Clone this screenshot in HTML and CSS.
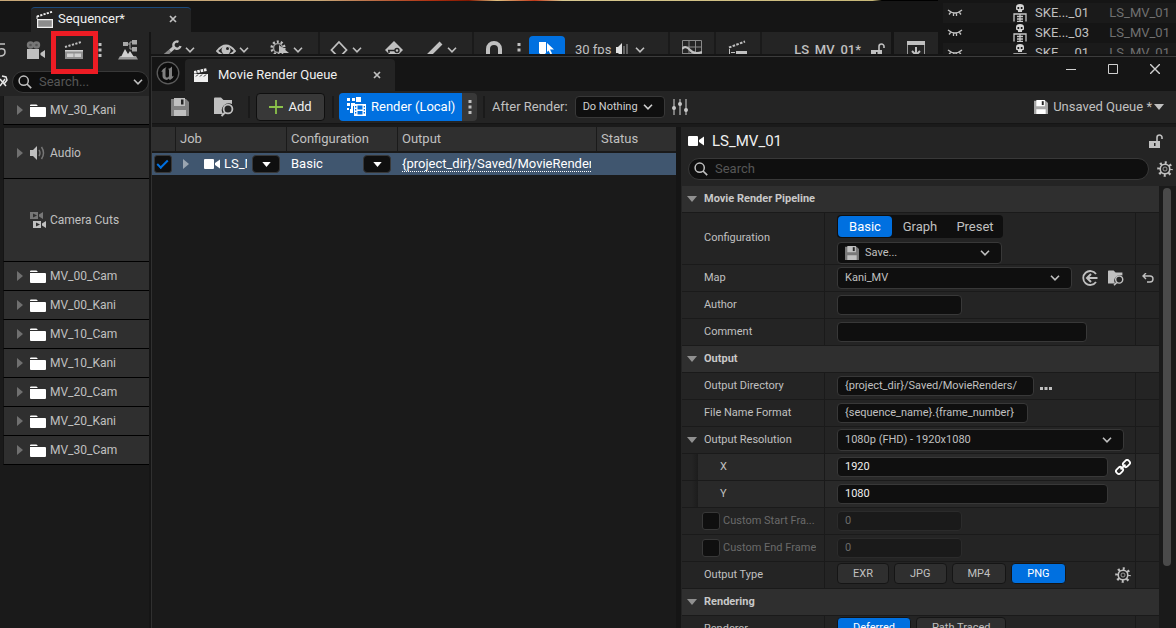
FILE: index.html
```html
<!DOCTYPE html>
<html lang="en">
<head>
<meta charset="utf-8">
<title>Movie Render Queue</title>
<link rel="stylesheet" href="styles.css">
</head>
<body>
<svg class="defs" aria-hidden="true">
  <symbol id="chev" viewBox="0 0 10 6"><path d="M1 .8l4 4 4-4" fill="none" stroke="currentColor" stroke-width="1.6"/></symbol>
  <symbol id="close" viewBox="0 0 8 8"><path d="M1 1l6 6M7 1L1 7" stroke="currentColor" stroke-width="1.7"/></symbol>
  <symbol id="tri-r" viewBox="0 0 6 10"><path d="M0 0l6 5-6 5z" fill="currentColor"/></symbol>
  <symbol id="tri-d" viewBox="0 0 10 6"><path d="M0 0h10L5 6z" fill="currentColor"/></symbol>
  <symbol id="dots" viewBox="0 0 4 14"><path d="M.5 0h3v3h-3zM.5 5.500h3v3h-3zM.5 11h3v3h-3z" fill="currentColor"/></symbol>
  <symbol id="search" viewBox="0 0 14 14"><circle cx="5.700" cy="5.700" r="4.600" fill="none" stroke="currentColor" stroke-width="1.500"/><path d="M9 9l4.200 4.200" stroke="currentColor" stroke-width="1.700"/></symbol>
  <symbol id="folder" viewBox="0 0 16 13"><path d="M0 1.500Q0 .5 1 .5h5.500L8 2H0zM0 3h15q1 0 1 1v8q0 1-1 1H1q-1 0-1-1z" fill="currentColor"/></symbol>
  <symbol id="cam" viewBox="0 0 16 10"><rect width="10" height="10" rx="1" fill="currentColor"/><path d="M16 .5v9L11 6V4z" fill="currentColor"/></symbol>
  <symbol id="save" viewBox="0 0 18 18"><path d="M0 1h15l3 3v14H0z" fill="currentColor" opacity=".6"/><path d="M3 0h11v8H3zM3 12h12v6H3z" fill="currentColor"/><path d="M10 1.500h2.500v5H10z" fill="#222"/></symbol>
  <symbol id="browse" viewBox="0 0 20 20"><path d="M0 1.500Q0 .5 1 .5h6L9.500 3H18v4a7 7 0 0 0-9 10H0z" fill="currentColor"/><circle cx="14" cy="12" r="4.400" fill="none" stroke="currentColor" stroke-width="1.800"/><path d="M11 15.500L7.500 19" stroke="currentColor" stroke-width="2"/></symbol>
  <symbol id="slate" viewBox="0 0 18 18"><path d="M1.600 9.600h14.800v7.800H1.600z" fill="#8c8c8c" stroke="currentColor" stroke-width="1.200"/><path d="M1 6.500L16 1.800" stroke="currentColor" stroke-width="1.900" stroke-dasharray="2.200 1.200"/><path d="M1 6v3" stroke="currentColor"/></symbol>
  <symbol id="slate-grid" viewBox="0 0 20 20"><path d="M1 10h18v9H1z" fill="#909090"/><path d="M1 10h18v1.500H1zM3 13.500h6.500V17H3zM10.500 13.500H17V17h-6.500z" fill="#d0d0d0"/><path d="M1 7L18 1.800" stroke="currentColor" stroke-width="2" stroke-dasharray="2.200 1.400"/></symbol>
  <symbol id="slate-solid" viewBox="0 0 14 14"><path d="M0 6h14v8H0z" fill="currentColor"/><path d="M0 4.500L13 1.500" stroke="currentColor" stroke-width="2.800" stroke-dasharray="2.600 .8"/><path d="M2 8.500l2-2M6 8.500l2-2M10 8.500l2-2" stroke="#242424"/></symbol>
  <symbol id="gear" viewBox="0 0 16 16"><circle cx="8" cy="8" r="6.300" fill="none" stroke="currentColor" stroke-width="3" stroke-dasharray="2 2.948" stroke-dashoffset="1"/><circle cx="8" cy="8" r="4.800" fill="none" stroke="currentColor" stroke-width="1.600"/><circle cx="8" cy="8" r="2" fill="none" stroke="currentColor" opacity=".7"/></symbol>
  <symbol id="lock" viewBox="0 0 14 14"><path d="M0 7h11v7H0z" fill="currentColor"/><path d="M8 7V3.500a2.500 2.500 0 0 1 5 0V5" fill="none" stroke="currentColor" stroke-width="1.600"/><path d="M5 9h1.500v3H5z" fill="#242424"/></symbol>
  <symbol id="lash" viewBox="0 0 16 8"><path d="M1 1q7 6 14 0M3.500 3.500l-1.500 2M6.500 4.500V7M9.500 4.500V7M12.500 3.500l1.500 2" fill="none" stroke="currentColor" stroke-width="1.300"/></symbol>
  <symbol id="skel" viewBox="0 0 14 18"><path d="M3 3q0-3 4-3t4 3v2.500l-2 1V8H5V6.500l-2-1z" fill="#d4d4d4"/><path d="M4.500 3h1.700v2H4.500zM7.800 3h1.700v2H7.800z" fill="#1a1a1a"/><path d="M1 17.500V10h12v7.500M4 12.500h6M4 15h6M4 17.500h6M7 10v7" fill="none" stroke="#c8c8c8" stroke-width="1.300"/></symbol>
</svg>

<div class="app">
  <div class="back">
    <div class="editor">
      <div class="film"></div>
      <div class="tabs">
        <div class="tab seq-tab">
          <svg class="i18"><use href="#slate"/></svg><span>Sequencer*</span>
          <button class="plain x" aria-label="Close Sequencer"><svg class="i8"><use href="#close"/></svg></button>
        </div>
      </div>
      <div class="seq">
        <div class="left">
          <div class="ltools">
            <svg width="6" height="14" viewBox="0 0 6 14" fill="none" stroke="currentColor" stroke-width="1.500"><path d="M0 1h5M0 6q5-1 5 3t-5 4"/></svg>
            <button class="plain" aria-label="Camera"><svg width="20" height="18" viewBox="0 0 20 18"><circle cx="5.500" cy="4" r="3.700" fill="#777"/><circle cx="11.500" cy="4" r="3.700" fill="#777"/><circle cx="5.500" cy="4" r="1.300" fill="#555"/><circle cx="11.500" cy="4" r="1.300" fill="#555"/><path d="M2 8h12v10H2zM20 9v8l-4.500-3v-2z" fill="currentColor"/></svg></button>
            <button class="plain" aria-label="Render movie"><svg class="i20"><use href="#slate-grid"/></svg></button>
            <button class="plain" aria-label="Render options"><svg width="4" height="14"><use href="#dots"/></svg></button>
            <button class="plain" aria-label="Scene actions"><svg width="20" height="20" viewBox="0 0 20 20"><path d="M0 19.500L2 16h16l2 3.500z" fill="#999"/><path d="M3 17l4-8 3 5 2-3 4 6z" fill="#d0d0d0"/><path d="M5 2h5v4H5zM14 0h5v4.500h-5zM14 7h5v4.500h-5z" fill="#a8a8a8"/><path d="M10 4h2v5h2M12 4V2h2" fill="none" stroke="#a8a8a8"/></svg></button>
          </div>
          <div class="lsearch">
            <svg width="8" height="16" viewBox="0 0 8 16"><path d="M0 12l5-7M0 5l6 7M2 2l4 1 1 3-3 4" stroke="#e8e8e8" stroke-width="1.500" fill="none"/></svg>
            <div class="pill">
              <svg class="i14"><use href="#search"/></svg>
              <input type="text" placeholder="Search..." aria-label="Search tracks">
              <svg class="chev"><use href="#chev"/></svg>
            </div>
          </div>
          <ul class="tracks">
            <li class="pinned"><svg class="tri"><use href="#tri-r"/></svg><svg class="fold"><use href="#folder"/></svg>MV_30_Kani</li>
            <li class="audio"><svg class="tri"><use href="#tri-r"/></svg><svg width="16" height="14" viewBox="0 0 16 14"><path d="M0 4h3l4-4v14l-4-4H0z" fill="#c0c0c0"/><path d="M9 4q2 3 0 6M11.500 1q4 6 0 12" fill="none" stroke="#777" stroke-width="1.500"/></svg>Audio</li>
            <li class="cuts"><span class="tri"></span><svg width="16" height="17" viewBox="0 0 16 17"><path d="M0 0h8v7H0zM13 0v7L9 4.500v-2z" fill="#777"/><path d="M3 1.500v4L7 3.500z" fill="#2f2f2f"/><path d="M3 9h8v7H3zM16 9v7l-4-2.500v-2z" fill="#c0c0c0"/><path d="M6 10.500v4l4-2z" fill="#2f2f2f"/></svg>Camera Cuts</li>
            <li><svg class="tri"><use href="#tri-r"/></svg><svg class="fold"><use href="#folder"/></svg>MV_00_Cam</li>
            <li><svg class="tri"><use href="#tri-r"/></svg><svg class="fold"><use href="#folder"/></svg>MV_00_Kani</li>
            <li><svg class="tri"><use href="#tri-r"/></svg><svg class="fold"><use href="#folder"/></svg>MV_10_Cam</li>
            <li><svg class="tri"><use href="#tri-r"/></svg><svg class="fold"><use href="#folder"/></svg>MV_10_Kani</li>
            <li><svg class="tri"><use href="#tri-r"/></svg><svg class="fold"><use href="#folder"/></svg>MV_20_Cam</li>
            <li><svg class="tri"><use href="#tri-r"/></svg><svg class="fold"><use href="#folder"/></svg>MV_20_Kani</li>
            <li><svg class="tri"><use href="#tri-r"/></svg><svg class="fold"><use href="#folder"/></svg>MV_30_Cam</li>
          </ul>
        </div>
        <div class="rtools">
          <div class="group g-view">
            <button class="plain drop" aria-label="Actions"><svg class="i20" viewBox="0 0 20 20"><path d="M0 18l8-7" stroke="#888" stroke-width="3.600"/><path d="M8 11l4-3.500" stroke="currentColor" stroke-width="3.200"/><path d="M16.500 1.800A3.600 3.600 0 1 0 18.500 6" fill="none" stroke="currentColor" stroke-width="2.400"/></svg><svg class="chev"><use href="#chev"/></svg></button>
            <button class="plain drop" aria-label="View"><svg class="i20" viewBox="0 0 20 20"><path d="M1 11q9-11 18 0-9 9-18 0z" fill="none" stroke="currentColor" stroke-width="1.800"/><circle cx="10" cy="10" r="4.500" fill="currentColor"/><circle cx="11.500" cy="8.500" r="1.500" fill="#242424"/></svg><svg class="chev"><use href="#chev"/></svg></button>
            <button class="plain drop" aria-label="Playback"><svg class="i20" viewBox="0 0 20 20"><circle cx="8" cy="8" r="6.300" fill="none" stroke="currentColor" stroke-width="2.600" stroke-dasharray="2 1.958"/><circle cx="8" cy="8" r="4.500" fill="none" stroke="#999" stroke-width="1.600"/><path d="M9 5l10 8H9z" fill="currentColor"/></svg><svg class="chev"><use href="#chev"/></svg></button>
          </div>
          <div class="group g-keys">
            <button class="plain drop" aria-label="Key interpolation"><svg class="i20" viewBox="0 0 20 20"><path d="M10 2l7.500 8-7.500 8-7.500-8z" fill="none" stroke="currentColor" stroke-width="1.800"/></svg><svg class="chev"><use href="#chev"/></svg></button>
            <button class="plain" aria-label="Auto key"><svg class="i20" viewBox="0 0 20 20"><path d="M11 1l9 9-9 9-9-9z" fill="currentColor"/><path d="M5 10.500h7M6 10.500v2.500" stroke="#242424" stroke-width="1.500"/><circle cx="14" cy="10.500" r="2" fill="none" stroke="#242424" stroke-width="1.400"/></svg></button>
            <button class="plain drop" aria-label="Edit"><svg class="i20" viewBox="0 0 20 20"><path d="M4 16L17 3" stroke="currentColor" stroke-width="4"/></svg><svg class="chev"><use href="#chev"/></svg></button>
          </div>
          <div class="group g-snap">
            <button class="plain" aria-label="Snap"><svg width="18" height="20" viewBox="0 0 18 20"><path d="M3 18V9a6 6 0 0 1 12 0v9" fill="none" stroke="currentColor" stroke-width="4"/></svg></button>
            <button class="plain" aria-label="Snap options"><svg width="4" height="14"><use href="#dots"/></svg></button>
            <button class="bluebtn" aria-label="Marker"><svg width="18" height="18" viewBox="0 0 18 18"><path d="M1 1h7v11l-3.500 3L1 12z" fill="#fff"/><path d="M9 2l7 6.500h-4l2 4-1.500 1-2-4L9 11z" fill="#fff"/></svg></button>
            <button class="plain fps">30 fps</button>
            <svg width="14" height="14" viewBox="0 0 14 14"><path d="M0 4h2l4-4v14l-4-4H0z" fill="#e0e0e0"/><path d="M8 3v8M11 1v12" stroke="#777" stroke-width="1.500"/></svg>
            <svg class="chev"><use href="#chev"/></svg>
          </div>
          <div class="group g-mid"><button class="plain" aria-label="Curve editor"><svg class="i20" viewBox="0 0 20 20"><path d="M.5.500h19v19H.5zM7 0v20M13.500 0v20M0 7h20M0 13.500h20" fill="none" stroke="#888"/><path d="M0 9q4-4 8 1t12 2" fill="none" stroke="currentColor" stroke-width="2.200"/></svg></button></div>
          <div class="group g-mid"><button class="plain" aria-label="Takes"><svg class="i20" viewBox="0 0 20 20"><path d="M1 7.500L17 1.500" stroke="currentColor" stroke-width="2" stroke-dasharray="2.600 1.300"/><path d="M8 11h11v3H8zM1 9h1v8H1zM3 12h4v1H3z" fill="currentColor"/></svg></button></div>
          <div class="group g-name"><span class="seqname">LS_MV_01*</span><svg class="i14"><use href="#lock"/></svg></div>
          <div class="group g-dock"><button class="plain" aria-label="Dock"><svg width="18" height="20" viewBox="0 0 18 20"><path d="M0 1h18v4H0z" fill="currentColor"/><path d="M.5 5v14.500h17V5" fill="none" stroke="#999"/><path d="M9 7v9M5 11l4 4 4-4" fill="none" stroke="currentColor" stroke-width="2"/></svg></button></div>
        </div>
      </div>
      <div class="mark"></div>
    </div>
    <div class="outliner">
      <div class="orow"><svg class="lash"><use href="#lash"/></svg><svg class="skel"><use href="#skel"/></svg><span class="nm">SKE..._01</span><span class="dim">LS_MV_01</span></div>
      <div class="orow"><svg class="lash"><use href="#lash"/></svg><svg class="skel"><use href="#skel"/></svg><span class="nm">SKE..._03</span><span class="dim">LS_MV_01</span></div>
      <div class="orow"><svg class="lash"><use href="#lash"/></svg><svg class="skel"><use href="#skel"/></svg><span class="nm">SKE..._01</span><span class="dim">LS_MV_01</span></div>
    </div>
  </div>

  <main class="window">
    <header class="titlebar">
      <svg class="logo" viewBox="0 0 24 24"><circle cx="12" cy="12" r="10.800" fill="#0c0c0c" stroke="#5c5c5c" stroke-width="1.300"/><path d="M5 11q1.500-3.500 5.500-5-1 1-1 2.500V15q0 1.500 1.500 1.500T13 15V9q0-1-1.200-1Q14 7.500 16 5.500V15q.5 1 2-.5-1 3.500-4 4.500l-1.500-1.300L11 19q-4.500-.5-4.500-4v-4q-.3-1-1.500 0z" fill="#808080"/></svg>
      <div class="tab win-tab"><svg class="i14"><use href="#slate-solid"/></svg><span>Movie Render Queue</span><button class="plain x" aria-label="Close tab"><svg class="i8"><use href="#close"/></svg></button></div>
      <div class="winbtns">
        <button class="plain" aria-label="Minimize"><svg width="10" height="10" viewBox="0 0 10 10"><path d="M0 5.500h10" stroke="currentColor"/></svg></button>
        <button class="plain" aria-label="Maximize"><svg width="10" height="10" viewBox="0 0 10 10"><path d="M.5.500h9v9h-9z" fill="none" stroke="currentColor"/></svg></button>
        <button class="plain" aria-label="Close"><svg width="10" height="10" viewBox="0 0 10 10"><path d="M0 0l10 10M10 0L0 10" stroke="currentColor" stroke-width="1.400"/></svg></button>
      </div>
    </header>

    <div class="toolbar">
      <button class="plain b-save" aria-label="Save"><svg class="i18"><use href="#save"/></svg></button>
      <button class="plain b-browse" aria-label="Browse"><svg class="i20"><use href="#browse"/></svg></button>
      <i class="sep"></i>
      <button class="add"><svg width="14" height="14" viewBox="0 0 14 14"><path d="M7 0v14M0 7h14" stroke="#8bc24a" stroke-width="1.800"/></svg>Add</button>
      <i class="sep"></i>
      <div class="split">
        <button class="render"><svg class="i20" viewBox="0 0 20 20"><path d="M0 1h3v3H0zM5 1h3v3H5zM0 6h3v3H0zM9 0h5v5H9zM4 6h4v3H6v7H3v-4h1zM0 11h2v2H0z" fill="#fff"/><path d="M7 7h12v12H7z" fill="#fff"/><path d="M10.500 8.500h5v4h-5zM10.500 14h5v3.500h-5zM8 9h1.300v1.500H8zM8 12h1.300v1.500H8zM8 15h1.300v1.500H8zM16.700 9H18v1.500h-1.300zM16.700 12H18v1.500h-1.300zM16.700 15H18v1.500h-1.300z" fill="#0070e0"/></svg>Render (Local)</button>
        <button class="more" aria-label="Render options"><svg width="4" height="14"><use href="#dots"/></svg></button>
      </div>
      <i class="sep"></i>
      <label for="after" class="after">After Render:</label>
      <div class="select s-after"><select id="after"><option>Do Nothing</option></select><svg class="chev"><use href="#chev"/></svg></div>
      <button class="plain" aria-label="Settings"><svg width="16" height="16" viewBox="0 0 16 16"><path d="M2 0v16M8 0v16M14 0v16" stroke="#999" stroke-width="1.500"/><circle cx="2" cy="9" r="2" fill="#c8c8c8"/><circle cx="8" cy="5" r="2" fill="#c8c8c8"/><circle cx="14" cy="11" r="2" fill="#c8c8c8"/></svg></button>
      <button class="plain queue"><svg class="i14 white"><use href="#save"/></svg><span>Unsaved Queue *</span><svg class="down"><use href="#tri-d"/></svg></button>
    </div>

    <div class="content">
      <section class="jobs">
        <table>
          <colgroup><col class="c1"><col class="c2"><col class="c3"><col class="c4"><col></colgroup>
          <thead><tr><th></th><th>Job</th><th>Configuration</th><th>Output</th><th>Status</th></tr></thead>
          <tbody><tr>
            <td><input type="checkbox" class="check" checked aria-label="Enable job"></td>
            <td><div class="cell job"><svg class="tri"><use href="#tri-r"/></svg><svg class="cam"><use href="#cam"/></svg><span class="clip">LS_MV_01</span><button class="pick" aria-label="Choose sequence"><svg class="down"><use href="#tri-d"/></svg></button></div></td>
            <td><div class="cell"><span class="clip">Basic</span><button class="pick" aria-label="Choose configuration"><svg class="down"><use href="#tri-d"/></svg></button></div></td>
            <td><div class="cell out"><a href="#">{project_dir}/Saved/MovieRenders/</a></div></td>
            <td></td>
          </tr></tbody>
        </table>
      </section>

      <section class="details">
        <div class="dhead"><svg class="cam"><use href="#cam"/></svg><h1>LS_MV_01</h1><svg class="i14"><use href="#lock"/></svg></div>
        <div class="dsearch"><div class="pill"><svg class="i14"><use href="#search"/></svg><input type="text" placeholder="Search" aria-label="Search details"></div><button class="plain" aria-label="View options"><svg class="i16"><use href="#gear"/></svg></button></div>
        <div class="scroll">
          <div class="props">
            <h2><svg class="down"><use href="#tri-d"/></svg>Movie Render Pipeline</h2>
            <div class="row tall"><span class="lab">Configuration</span><div class="val stack">
              <div class="seg"><button class="on">Basic</button><button>Graph</button><button>Preset</button></div>
              <div class="select s-save"><svg class="i14 lead"><use href="#save"/></svg><select aria-label="Configuration preset"><option>Save...</option></select><svg class="chev"><use href="#chev"/></svg></div>
            </div><span class="rst"></span></div>
            <div class="row"><label class="lab" for="map">Map</label><div class="val">
              <div class="select s-map"><select id="map"><option>Kani_MV</option></select><svg class="chev"><use href="#chev"/></svg></div>
              <button class="plain use" aria-label="Use selected"><svg class="i16" viewBox="0 0 16 16"><path d="M14 4A7 7 0 1 0 14 12" fill="none" stroke="currentColor" stroke-width="1.800"/><path d="M15.500 8H5M9 4L5 8l4 4" fill="none" stroke="currentColor" stroke-width="2"/></svg></button>
              <button class="plain find" aria-label="Browse to asset"><svg class="i16"><use href="#browse"/></svg></button>
            </div><button class="rst plain" aria-label="Reset"><svg width="12" height="10" viewBox="0 0 12 10"><path d="M4 0L1 3l3 3M1 3h7a3 3 0 0 1 0 6H5" fill="none" stroke="currentColor" stroke-width="1.400"/></svg></button></div>
            <div class="row"><label class="lab" for="author">Author</label><div class="val"><input class="box w124" id="author" type="text"></div><span class="rst"></span></div>
            <div class="row"><label class="lab" for="comment">Comment</label><div class="val"><input class="box w249" id="comment" type="text"></div><span class="rst"></span></div>
            <h2><svg class="down"><use href="#tri-d"/></svg>Output</h2>
            <div class="row"><label class="lab" for="dir">Output Directory</label><div class="val"><input class="box w196" id="dir" type="text" value="{project_dir}/Saved/MovieRenders/"><button class="plain ell" aria-label="Choose directory"><svg width="12" height="4" viewBox="0 0 12 4"><path d="M0 1h3v3H0zM4.500 1h3v3h-3zM9 1h3v3H9z" fill="currentColor"/></svg></button></div><span class="rst"></span></div>
            <div class="row"><label class="lab" for="fmt">File Name Format</label><div class="val"><input class="box w190" id="fmt" type="text" value="{sequence_name}.{frame_number}"></div><span class="rst"></span></div>
            <div class="row"><label class="lab open" for="res"><svg class="down"><use href="#tri-d"/></svg>Output Resolution</label><div class="val"><div class="select s-res"><select id="res"><option>1080p (FHD) - 1920x1080</option></select><svg class="chev"><use href="#chev"/></svg></div></div><span class="rst"></span></div>
            <div class="row sub"><label class="lab" for="rx">X</label><div class="val"><input class="box num" id="rx" type="text" value="1920"><button class="plain link" aria-label="Lock aspect ratio"><svg class="i16" viewBox="0 0 16 16"><g transform="rotate(-45 8 8)" fill="none" stroke="#fff" stroke-width="1.800"><rect x="-.5" y="5.300" width="7.200" height="5.400" rx="2.200"/><rect x="9.300" y="5.300" width="7.200" height="5.400" rx="2.200"/><path d="M4.500 8h7"/></g></svg></button></div><span class="rst"></span></div>
            <div class="row sub"><label class="lab" for="ry">Y</label><div class="val"><input class="box num" id="ry" type="text" value="1080"></div><span class="rst"></span></div>
            <div class="row off"><span class="lab chk"><input type="checkbox" class="check" id="cs"><label for="cs">Custom Start Fra...</label></span><div class="val"><input class="box w124" type="text" value="0" disabled aria-label="Start frame"></div><span class="rst"></span></div>
            <div class="row off"><span class="lab chk"><input type="checkbox" class="check" id="ce"><label for="ce">Custom End Frame</label></span><div class="val"><input class="box w124" type="text" value="0" disabled aria-label="End frame"></div><span class="rst"></span></div>
            <div class="row"><span class="lab">Output Type</span><div class="val types"><button>EXR</button><button>JPG</button><button>MP4</button><button class="on">PNG</button><button class="plain cog" aria-label="Output settings"><svg class="i16"><use href="#gear"/></svg></button></div><span class="rst"></span></div>
            <h2><svg class="down"><use href="#tri-d"/></svg>Rendering</h2>
            <div class="row"><span class="lab">Renderer</span><div class="val types wide"><button class="on">Deferred</button><button>Path Traced</button></div><span class="rst"></span></div>
          </div>
          <div class="bar"><div class="thumb"></div></div>
        </div>
      </section>
    </div>
  </main>
</div>
</body>
</html>
```
FILE: styles.css
```css
* { box-sizing: border-box; }
body { margin: 0; background: #151515; color: #c0c0c0; font: 13px/16px Roboto, "Liberation Sans", sans-serif; }
button, input, select { font: inherit; color: inherit; margin: 0; }
button { cursor: pointer; white-space: nowrap; }
svg { display: block; flex: none; }
h1, h2, ul { margin: 0; padding: 0; }
.defs { display: none; }
.i8 { width: 8px; height: 8px; }
.i14 { width: 14px; height: 14px; }
.i16 { width: 16px; height: 16px; }
.i18 { width: 18px; height: 18px; }
.i20 { width: 20px; height: 20px; }
.chev { width: 10px; height: 6px; }
.down { width: 10px; height: 6px; }
.tri { width: 6px; height: 10px; color: #707070; }
.fold { width: 16px; height: 13px; color: #fff; }
.cam { width: 16px; height: 10px; color: #fff; }
.white { color: #fff; }
.plain { display: flex; align-items: center; padding: 0; border: 0; background: none; }

.app { position: relative; height: 100vh; overflow: hidden; }
.back { display: flex; height: 100%; }
.editor { position: relative; display: flex; flex-direction: column; flex: 1; min-width: 0; }
.film { height: 1px; background: linear-gradient(90deg, #c8a878 0, #c8a878 34%, #b03010 46%, #801800 50%, #e0c080 53%, #c03818 57%, #d8c890 60%, #c8b878 93%, #000 94%); }
.tabs { display: flex; align-items: flex-end; height: 31px; padding-left: 31px; }
.tab { display: flex; align-items: center; background: #242424; color: #f0f0f0; border-radius: 4px 4px 0 0; }
.tab .x { margin-left: auto; color: #c0c0c0; }
.seq-tab { width: 160px; height: 25px; padding: 0 14px 2px 5px; gap: 4px; border-top: 1px solid #1b4a7c; }
.seq { display: flex; flex: 1; min-height: 0; }

.left { display: flex; flex-direction: column; width: 149px; overflow: hidden; background: #1a1a1a; }
.ltools { display: flex; align-items: center; gap: 19px; height: 36px; background: #242424; }
.ltools button:nth-of-type(3) { margin-left: -5px; margin-right: -3px; }
.lsearch { display: flex; align-items: center; gap: 4px; height: 28px; padding-bottom: 1px; background: #242424; }
.pill { display: flex; align-items: center; gap: 7px; border: 1px solid #383838; border-radius: 12px; background: #0f0f0f; height: 22px; padding: 0 5px; }
.pill input { flex: 1; min-width: 0; padding: 0; border: 0; background: none; outline: 0; }
.pill input::placeholder { color: #565656; opacity: 1; }
.lsearch .pill { flex: 1; min-width: 0; }
.tracks { list-style: none; font-size: 12px; }
.tracks li { display: flex; align-items: center; height: 29px; margin-left: 3px; padding-left: 13px; gap: 4px; background: #2f2f2f; border-left: 1px solid #151515; border-bottom: 1px solid #000; }
.tracks .tri { margin-right: 3px; }
.tracks .pinned { margin-bottom: 3px; }
.tracks .audio { height: 51px; }
.tracks .cuts { height: 83px; }

.rtools { display: flex; flex: 1; height: 36px; margin-left: 2px; overflow: hidden; color: #c0c0c0; }
.group { display: flex; align-items: center; background: #242424; border-right: 2px solid #1a1a1a; }
.drop { gap: 3px; }
.g-view { padding: 0 15px 0 11px; gap: 21px; }
.g-keys { padding: 0 15px 0 9px; gap: 21px; }
.g-snap { flex: none; padding: 0 23px 0 11px; }
.g-snap .bluebtn { display: flex; align-items: center; justify-content: center; width: 36px; height: 28px; margin: 0 10px 0 8px; border: 0; border-radius: 4px; background: #0070e0; }
.g-snap > button:nth-child(2) { margin-left: 14px; }
.fps { margin-right: 5px; }
.g-snap > .chev { margin-left: 5px; }
.g-mid { padding: 0 12px; }
.g-name { flex: 1; justify-content: flex-end; gap: 10px; padding-right: 6px; border-right: 3px solid #151515; }
.seqname { font-weight: 500; }
.g-dock { padding: 0 13px; border: 0; }
.mark { position: absolute; left: 51px; top: 31px; width: 47px; height: 43px; border: 5px solid #ed1c24; }

.outliner { width: 238px; padding: 3px 0 0 5px; background: #151515; }
.orow { display: flex; align-items: center; height: 20px; padding: 0 6px 0 4px; background: #1a1a1a; }
.orow:nth-child(even) { background: #151515; }
.lash { width: 16px; height: 8px; }
.skel { width: 14px; height: 18px; margin: 0 8px 0 50px; }
.nm { width: 75px; }
.dim { color: #707070; }

.window { position: absolute; inset: 56px 0 0 151px; display: flex; flex-direction: column; background: #1a1a1a; border-top: 1px solid #3c3c3c; border-left: 1px solid #303030; box-shadow: 0 0 0 2px #151515; }
.titlebar { display: flex; height: 34px; background: #151515; }
.logo { width: 24px; height: 24px; margin: 4px 5px 0 4px; }
.win-tab { width: 210px; margin-top: 2px; padding: 0 14px 0 9px; gap: 10px; }
.winbtns { display: flex; gap: 32px; margin-left: auto; padding: 0 16px 10px 0; color: #d0d0d0; }
.toolbar { display: flex; align-items: center; height: 33px; padding: 0 12px 0 19px; background: #242424; border-bottom: 1px solid #151515; }
.b-browse { margin: 0 14px 0 25px; }
.sep { width: 2px; height: 22px; background: #1a1a1a; }
.add { display: flex; align-items: center; justify-content: center; gap: 5px; width: 69px; height: 28px; margin: 0 7px 0 6px; padding: 0; border: 1px solid #0f0f0f; border-radius: 4px; background: #383838; color: #f0f0f0; }
.split { display: flex; height: 28px; margin: 0 6px 0 5px; }
.render { display: flex; align-items: center; gap: 4px; width: 123px; padding: 0 0 0 8px; border: 0; border-radius: 4px 0 0 4px; background: #0070e0; color: #fff; }
.more { display: flex; align-items: center; justify-content: center; width: 15px; padding: 0; border: 0; border-radius: 0 4px 4px 0; background: #383838; }
.after { margin: 0 7px; white-space: nowrap; }
.queue { margin-left: auto; gap: 5px; }
.queue .down { margin-left: -3px; }

.select { display: grid; grid-template-columns: 1fr; align-items: center; }
.select > * { grid-area: 1 / 1; }
.select > svg { pointer-events: none; justify-self: end; margin-right: 12px; }
.select select { width: 100%; height: 22px; padding: 0 22px 0 7px; border: 1px solid #383838; border-radius: 4px; background: #0f0f0f; appearance: none; outline: 0; }
.select .lead { z-index: 1; justify-self: start; margin-left: 8px; }
.s-after { width: 90px; margin-right: 7px; font-size: 11px; color: #d0d0d0; }
.s-save { width: 165px; }
.s-save select { padding-left: 27px; }
.s-map { width: 235px; }
.s-res { width: 287px; }

.content { display: flex; flex: 1; min-height: 0; padding-top: 3px; }
.jobs { flex: 524 1 0; min-width: 0; }
table { width: 100%; table-layout: fixed; border-collapse: separate; border-spacing: 0; }
.c1 { width: 24px; } .c2, .c3 { width: 111px; } .c4 { width: 199px; }
th { height: 26px; padding: 0 4px; text-align: left; font-weight: 400; background: #2f2f2f; border-right: 1px solid #1a1a1a; border-bottom: 2px solid #1a1a1a; }
th:last-child { border-right: 0; }
td { height: 22px; padding: 0; background: #40566f; color: #fff; }
.cell { display: flex; align-items: center; padding: 0 7px 0 4px; }
.job { padding-left: 7px; }
.job .tri { margin-right: 15px; color: #9aa5b1; }
.job .cam { margin-right: 4px; }
.clip { flex: 1; min-width: 0; margin-right: 5px; overflow: hidden; white-space: nowrap; }
.pick { display: flex; align-items: center; justify-content: center; width: 28px; height: 18px; padding: 0; border: 1px solid #383838; border-radius: 4px; background: #0f0f0f; color: #fff; }
.pick .down { width: 9px; height: 5px; }
.out { overflow: hidden; margin-right: 6px; padding-right: 0; }
.out a { overflow: hidden; color: #fff; text-decoration: none; line-height: 14px; border-bottom: 1px dotted #fff; white-space: nowrap; }
.check { display: block; appearance: none; width: 18px; height: 18px; border: 1px solid #383838; border-radius: 3px; background: #0f0f0f; flex: none; }
td .check { margin-left: 2px; }
.check:checked::before { content: ""; display: block; width: 9px; height: 4px; margin: 4px 0 0 2px; border: solid #0070e0; border-width: 0 0 2px 2px; transform: rotate(-45deg); }

.details { display: flex; flex-direction: column; flex: 495 1 0; min-width: 0; box-sizing: content-box; border-left: 5px solid #151515; background: #242424; font-size: 11px; }
.dhead { display: flex; align-items: center; gap: 8px; height: 28px; padding: 0 13px 0 7px; }
.dhead h1 { flex: 1; font-size: 15px; font-weight: 400; color: #f0f0f0; }
.dsearch { display: flex; align-items: center; gap: 8px; height: 31px; padding: 0 3px 3px 7px; font-size: 13px; }
.dsearch .pill { flex: 1; }
.scroll { display: flex; flex: 1; min-height: 0; overflow: hidden; padding-left: 1px; }
.props { flex: 1; min-width: 0; overflow: hidden; }
h2 { display: flex; align-items: center; gap: 7px; height: 27px; padding-left: 5px; padding-bottom: 1px; font-size: 11px; font-weight: 700; color: #c8c8c8; background: #2f2f2f; border-bottom: 1px solid #1a1a1a; }
h2 .down, .lab .down { color: #909090; }
.row { display: grid; grid-template-columns: 143px 1fr 24px; height: 27px; border-bottom: 1px solid #1a1a1a; }
.tall { height: 52px; }
.lab { display: flex; align-items: center; padding-left: 22px; padding-bottom: 1px; border-right: 1px solid #1a1a1a; white-space: nowrap; overflow: hidden; }
.open { padding-left: 5px; gap: 7px; }
.val { display: flex; align-items: center; padding-left: 12px; min-width: 0; }
.rst { display: flex; align-items: center; justify-content: center; border-left: 1px solid #1a1a1a; }
button.rst { border-left: 1px solid #1a1a1a; }
.stack { flex-direction: column; align-items: flex-start; gap: 4px; padding-top: 2px; justify-content: flex-start; }
.seg { display: flex; height: 23px; padding: 1px; border-radius: 4px; background: #0f0f0f; font-size: 13px; }
.seg button { width: 54px; padding: 0; border: 0; border-radius: 4px; background: none; }
.seg button:nth-child(2) { width: 56px; }
.seg .on { background: #0070e0; color: #fff; }
.use { margin-left: 10px; }
.find { margin-left: 10px; }
.box { height: 20px; padding: 0 7px 2px; border: 1px solid #383838; border-radius: 4px; background: #0f0f0f; outline: 0; }
.w124 { width: 125px; } .w190 { width: 191px; } .w196 { width: 197px; } .w249 { width: 250px; } .num { width: 271px; color: #f0f0f0; }
.ell { margin: 4px 0 0 6px; }
.link { margin-left: 7px; }
.sub { background: #292929; }
.sub .lab { padding-left: 38px; background: linear-gradient(90deg, #242424 10px, #1c1c1c 16px, #292929 16px); }
.chk { gap: 3px; padding-left: 20px; padding-bottom: 0; }
.chk label { overflow: hidden; text-overflow: ellipsis; color: #6a6a6a; }
.off .box { background: #1a1a1a; border-color: #2b2b2b; color: #6a6a6a; }
.types { align-items: flex-start; padding-top: 1px; gap: 5px; }
.types > button:not(.plain) { min-width: 52px; height: 21px; padding: 0 15px; border: 1px solid #151515; border-radius: 4px; background: #2f2f2f; }
.types > .on.on { background: #0070e0; color: #fff; }
.cog { margin: 4px 4px 0 auto; }
.bar { width: 17px; padding: 2px 5px 0 4px; background: #1a1a1a; }
.thumb { height: 86%; border-radius: 4px; background: #4a4a4a; }
```
